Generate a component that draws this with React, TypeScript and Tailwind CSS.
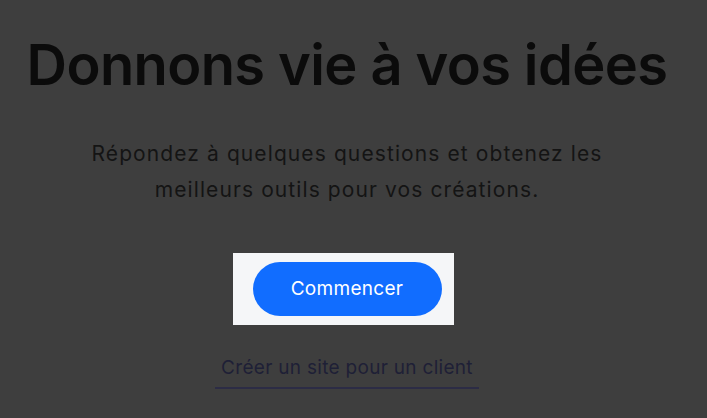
export default function App() {
  return (
    <div className="h-[418px] w-[707px] overflow-hidden bg-[#3e3e3e]" style={{ fontFamily: 'Inter, "Noto Sans", sans-serif' }}>
      <div className="w-[694px] flex flex-col items-center">
        <h1 className="mt-[28px] text-[56px] leading-[74px] font-semibold tracking-[-0.6px] text-[#0b0b0b] whitespace-nowrap">
          Donnons vie à vos idées
        </h1>
        <p className="mt-[34px] w-[560px] text-center text-[21px] leading-[36px] tracking-[1.1px] text-[#141414]">
          Répondez à quelques questions et obtenez les meilleurs outils pour vos créations.
        </p>
        <div className="mt-[45px] mr-[8px] bg-[#f5f6f8] pl-[20px] pr-[12px] py-[9px]">
          <button className="h-[54px] w-[189px] rounded-full bg-[#116dff] text-[19px] tracking-[0.3px] text-white">
            Commencer
          </button>
        </div>
        <a className="mt-[31px] border-b-2 border-[#2c2c45] px-[6px] pb-[7px] text-[19px] leading-[24px] tracking-[0.3px] text-[#1e2036]">
          Créer un site pour un client
        </a>
      </div>
    </div>
  )
}
